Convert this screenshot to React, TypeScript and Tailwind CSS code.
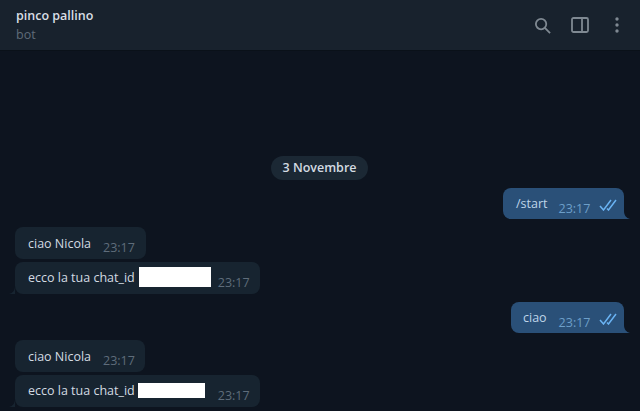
function DoubleCheck() {
  return (
    <svg width="18" height="12" viewBox="0 0 18 12" fill="none" stroke="#6ab3f3" strokeWidth="1.5" className="mt-[4px] ml-[1px]">
      <path d="M1 7l3.5 4L12 1" />
      <path d="M8 9.5L9.5 11L17 1" />
    </svg>
  );
}

function Sent({ text, width, pad, gap }: { text: string; width: string; pad: string; gap: string }) {
  return (
    <div className={`relative flex h-[31px] self-end rounded-t-[8px] rounded-bl-[8px] bg-[#2a5078] ${pad} ${width}`}>
      <span className={`mt-[7px] text-[12.5px] leading-[17px] text-[#bfd5e9] ${gap}`}>{text}</span>
      <span className="mt-[12px] text-[12.5px] leading-[17px] text-[#6d9fc9]">23:17</span>
      <span className="ml-[8px]">
        <span className="mt-[11px] block">
          <DoubleCheck />
        </span>
      </span>
      <svg width="6" height="8" viewBox="0 0 6 8" className="absolute right-[-6px] bottom-0" fill="#2a5078">
        <path d="M0 0C0 4 2 7 6 8H0z" />
      </svg>
    </div>
  );
}

function Received({
  text,
  width,
  gap,
  top,
  tail,
  children,
}: {
  text: string;
  width: string;
  gap: string;
  top: string;
  tail?: boolean;
  children?: React.ReactNode;
}) {
  return (
    <div className={`relative flex h-[32px] items-start rounded-[8px] bg-[#172430] pl-[13px] ${width}`}>
      <span className={`text-[12.5px] leading-[17px] text-[#d3dbe2] ${top} ${gap}`}>{text}</span>
      {children}
      <span className="mt-[12px] text-[12.5px] leading-[17px] text-[#5f6d7b]">23:17</span>
      {tail && (
        <svg width="6" height="8" viewBox="0 0 6 8" className="absolute left-[-6px] bottom-0" fill="#172430">
          <path d="M6 0C6 4 4 7 0 8H6z" />
        </svg>
      )}
    </div>
  );
}

export default function App() {
  return (
    <div className="flex h-[411px] w-[640px] flex-col overflow-hidden bg-[#0d141f] font-['Open_Sans',sans-serif]">
      {/* Header */}
      <div className="flex h-[51px] shrink-0 items-center justify-between border-b border-[#0a1119] bg-[#18222d] pl-[16px] pr-[21px]">
        <div className="flex flex-col">
          <span className="text-[12.5px] font-semibold leading-[17px] text-[#d9dfe5]">pinco pallino</span>
          <span className="mt-[2px] text-[12.5px] leading-[17px] text-[#5f6b78]">bot</span>
        </div>
        <div className="flex items-center text-[#7f8992]">
          <svg width="17" height="17" viewBox="0 0 18 18" fill="none" stroke="currentColor" strokeWidth="1.9">
            <circle cx="7.5" cy="7.5" r="5.5" />
            <path d="M11.5 11.5L17 17" />
          </svg>
          <svg width="18" height="16" viewBox="0 0 18 16" fill="none" stroke="currentColor" strokeWidth="1.8" className="ml-[20px]">
            <rect x="1" y="1" width="16" height="14" rx="1.5" />
            <path d="M11 1v14" />
          </svg>
          <svg width="4" height="16" viewBox="0 0 4 16" fill="currentColor" className="ml-[26px]">
            <circle cx="2" cy="2" r="1.7" />
            <circle cx="2" cy="8" r="1.7" />
            <circle cx="2" cy="14" r="1.7" />
          </svg>
        </div>
      </div>

      {/* Messages */}
      <div className="flex flex-col pl-[15px] pr-[16px] pt-[105px]">
        <div className="flex h-[24px] w-[97px] items-center justify-center self-center rounded-full bg-[#1b2834] text-[12.5px] font-semibold text-[#d3dbe2]">
          3 Novembre
        </div>

        <div className="mt-[8px] flex flex-col">
          <Sent text="/start" width="w-[121px]" pad="pl-[13px]" gap="mr-[11px]" />
        </div>

        <div className="mt-[8px] flex flex-col gap-[3px]">
          <Received text="ciao Nicola" width="w-[131px]" gap="mr-[12px]" top="mt-[8px]" />
          <Received text="ecco la tua chat_id" width="w-[245px]" gap="mr-[4px]" top="mt-[7px]" tail>
            <div className="mr-[7px] mt-[5px] h-[20px] w-[72px] bg-white" />
          </Received>
        </div>

        <div className="mt-[8px] flex flex-col">
          <Sent text="ciao" width="w-[113px]" pad="pl-[12px]" gap="mr-[12px]" />
        </div>

        <div className="mt-[7px] flex flex-col gap-[3px]">
          <Received text="ciao Nicola" width="w-[130px]" gap="mr-[12px]" top="mt-[8px]" />
          <Received text="ecco la tua chat_id" width="w-[245px]" gap="mr-[3px]" top="mt-[7px]" tail>
            <div className="mr-[13px] mt-[8px] h-[15px] w-[67px] bg-white" />
          </Received>
        </div>
      </div>
    </div>
  );
}
